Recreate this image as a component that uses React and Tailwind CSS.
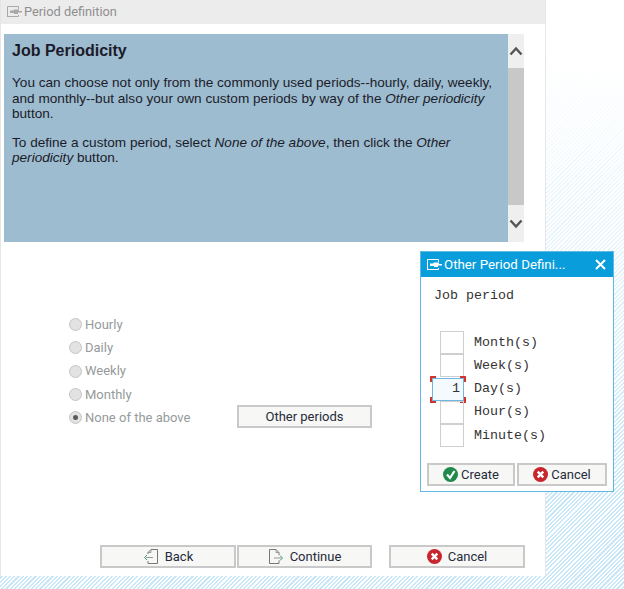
const ui = "font-['Roboto','Open_Sans',sans-serif]";

function WindowIcon({ color = "#a9a9a9", className = "" }) {
  return (
    <svg width="15" height="12" viewBox="0 0 15 12" className={className} fill="none">
      <path d="M.5 11V.5h11v2.500M.5 10.500h11V9" stroke={color} />
      <path d="M3 4.500h3.500V3.500H12V5h3v1.500h-4V8H7V7H3z" fill={color} />
    </svg>
  );
}

function Radio({ checked }) {
  return (
    <span className="flex h-[13px] w-[13px] shrink-0 items-center justify-center rounded-full border border-[#c4c4c4] bg-[#e2e2e2]">
      {checked && <span className="h-[5px] w-[5px] rounded-full bg-[#5a5a5a]" />}
    </span>
  );
}

function CancelIcon() {
  return (
    <svg width="15" height="15" viewBox="0 0 15 15">
      <circle cx="7.500" cy="7.500" r="7.500" fill="#c9252d" />
      <path d="M4.700 4.700l5.600 5.600M10.300 4.700l-5.600 5.600" stroke="#fff" strokeWidth="2.400" />
    </svg>
  );
}

function CreateIcon() {
  return (
    <svg width="15" height="15" viewBox="0 0 15 15">
      <circle cx="7.500" cy="7.500" r="7.500" fill="#1f8a4c" />
      <path d="M4 7.500l3 3.500 4.500-7" fill="none" stroke="#fff" strokeWidth="2.200" />
    </svg>
  );
}

function BackIcon() {
  return (
    <svg width="16" height="16" viewBox="0 0 16 16" fill="none">
      <path d="M5 5V3.500L8 .5h6.500v14H5V12" stroke="#777" />
      <path d="M8 .5v3H5" stroke="#999" />
      <path d="M10 8.500H3" stroke="#999" />
      <path d="M4 6L1.500 8.500 4 11" stroke="#2f9a6c" />
    </svg>
  );
}

function ContinueIcon() {
  return (
    <svg width="16" height="16" viewBox="0 0 16 16" fill="none">
      <path d="M1.500.5H8l3 3V6M11 11.500v3H1.500v-14" stroke="#777" />
      <path d="M8 .5v3h3" stroke="#999" />
      <path d="M6 9h7" stroke="#999" />
      <path d="M12 6.500L14.500 9 12 11.500" stroke="#2f9a6c" />
    </svg>
  );
}

function Btn({ className = "", children }) {
  return (
    <button className={`flex h-[23px] items-center justify-center gap-1.5 border-2 border-[#c9c9c9] bg-[#f7f7f6] text-[13px] text-[#262c3a] ${ui} ${className}`}>
      {children}
    </button>
  );
}

function PeriodRow({ label, value, focused }) {
  return (
    <div className="flex h-[23.250px] items-center">
      <div className={`relative flex h-[23px] items-center justify-end border pr-[3px] text-[13.330px] text-[#333] ${focused ? "ml-[11px] w-[32px] border-[#6fb7de] bg-[#f4fafd]" : "ml-[19px] w-[24px] border-[#cfcfcf]"}`}>
        {value}
        {focused && (
          <>
            <span className="absolute -left-[3px] -top-[3px] h-[6px] w-[6px] border-l-2 border-t-2 border-[#d0342c]" />
            <span className="absolute -right-[3px] -top-[3px] h-[6px] w-[6px] border-r-2 border-t-2 border-[#d0342c]" />
            <span className="absolute -bottom-[3px] -left-[3px] h-[6px] w-[6px] border-b-2 border-l-2 border-[#d0342c]" />
            <span className="absolute -bottom-[3px] -right-[3px] h-[6px] w-[6px] border-b-2 border-r-2 border-[#d0342c]" />
          </>
        )}
      </div>
      <span className="ml-[10px] text-[13.330px] text-[#333]">{label}</span>
    </div>
  );
}

export default function App() {
  const options = ["Hourly", "Daily", "Weekly", "Monthly", "None of the above"];

  return (
    <div className="relative h-[589px] w-[624px] overflow-hidden bg-[repeating-linear-gradient(135deg,#c8e8f7_0,#c8e8f7_1.500px,#ffffff_1.500px,#ffffff_3px)]">
      <div className="absolute inset-0 bg-gradient-to-b from-white from-[10%] to-transparent to-[85%]" />

      <div className="relative flex h-[576px] w-[546px] flex-col border-x border-[#e6e6e6] bg-white">
        <div className={`flex h-6 shrink-0 items-center gap-[2px] bg-[#ececec] pl-[6px] text-[12.800px] text-[#8f8f8f] ${ui}`}>
          <WindowIcon />
          Period definition
        </div>

        <div className="mt-[10px] flex h-[208px] pl-[3px]">
          <div className="w-[504px] bg-[#9dbccf] pl-2 pr-2 pt-[7px] font-['Liberation_Sans',sans-serif] text-[13.600px] leading-[15.500px] text-[#1b1b2a]">
            <h1 className="text-[16px] font-bold leading-5">Job Periodicity</h1>
            <p className="mt-[14px]">
              You can choose not only from the commonly used periods--hourly, daily, weekly, and monthly--but also your own custom periods by way of the <i>Other periodicity</i> button.
            </p>
            <p className="mt-[13px]">
              To define a custom period, select <i>None of the above</i>, then click the <i>Other periodicity</i> button.
            </p>
          </div>
          <div className="flex w-4 flex-col bg-[#efefef]">
            <div className="flex h-[34px] items-center justify-center">
              <svg width="14" height="10" viewBox="0 0 14 10" fill="none"><path d="M1.500 8.500L7 2.500l5.500 6" stroke="#555" strokeWidth="2.400" /></svg>
            </div>
            <div className="flex-1 bg-[#c8c8c8]" />
            <div className="flex h-[37px] items-center justify-center">
              <svg width="14" height="10" viewBox="0 0 14 10" fill="none"><path d="M1.500 1.500L7 7.500l5.500-6" stroke="#555" strokeWidth="2.400" /></svg>
            </div>
          </div>
        </div>

        <div className={`mt-[71px] flex flex-col pl-[68px] text-[13px] text-[#959b9b] ${ui}`}>
          {options.map((option, i) => (
            <div key={option} className="flex h-[23.250px] items-center gap-[3px]">
              <Radio checked={i === 4} />
              <span className={i === 4 ? "w-[149px]" : ""}>{option}</span>
              {i === 4 && <Btn className="mb-[2px] w-[135px]">Other periods</Btn>}
            </div>
          ))}
        </div>

        <div className="mt-auto mb-2 flex pl-[99px]">
          <Btn className="w-[136px]"><BackIcon />Back</Btn>
          <Btn className="ml-px w-[135px]"><ContinueIcon />Continue</Btn>
          <Btn className="ml-[17px] w-[136px]"><CancelIcon />Cancel</Btn>
        </div>
      </div>

      <div className="absolute left-[420px] top-[251px] flex h-[241px] w-[194px] flex-col border border-[#63b9e6] bg-white">
        <div className={`flex h-[25px] shrink-0 items-center bg-[#0a9ddb] pl-[6px] pr-[7px] text-[13.300px] text-white ${ui}`}>
          <WindowIcon color="#fff" className="mr-[2px]" />
          <span className="flex-1">Other Period Defini...</span>
          <svg width="11" height="11" viewBox="0 0 11 11"><path d="M1 1l9 9M10 1l-9 9" stroke="#fff" strokeWidth="2" /></svg>
        </div>
        <div className="flex flex-1 flex-col font-['Liberation_Mono',monospace]">
          <div className="ml-[13px] mt-[11px] text-[13.330px] leading-4 text-[#333]">Job period</div>
          <div className="mt-[27px] flex flex-col">
            <PeriodRow label="Month(s)" />
            <PeriodRow label="Week(s)" />
            <PeriodRow label="Day(s)" value="1" focused />
            <PeriodRow label="Hour(s)" />
            <PeriodRow label="Minute(s)" />
          </div>
          <div className="mt-auto mb-[5px] flex gap-0.5 pl-[6px]">
            <Btn className="w-[88px] !gap-[3px]"><CreateIcon />Create</Btn>
            <Btn className="w-[90px] !gap-[3px]"><CancelIcon />Cancel</Btn>
          </div>
        </div>
      </div>
    </div>
  );
}
